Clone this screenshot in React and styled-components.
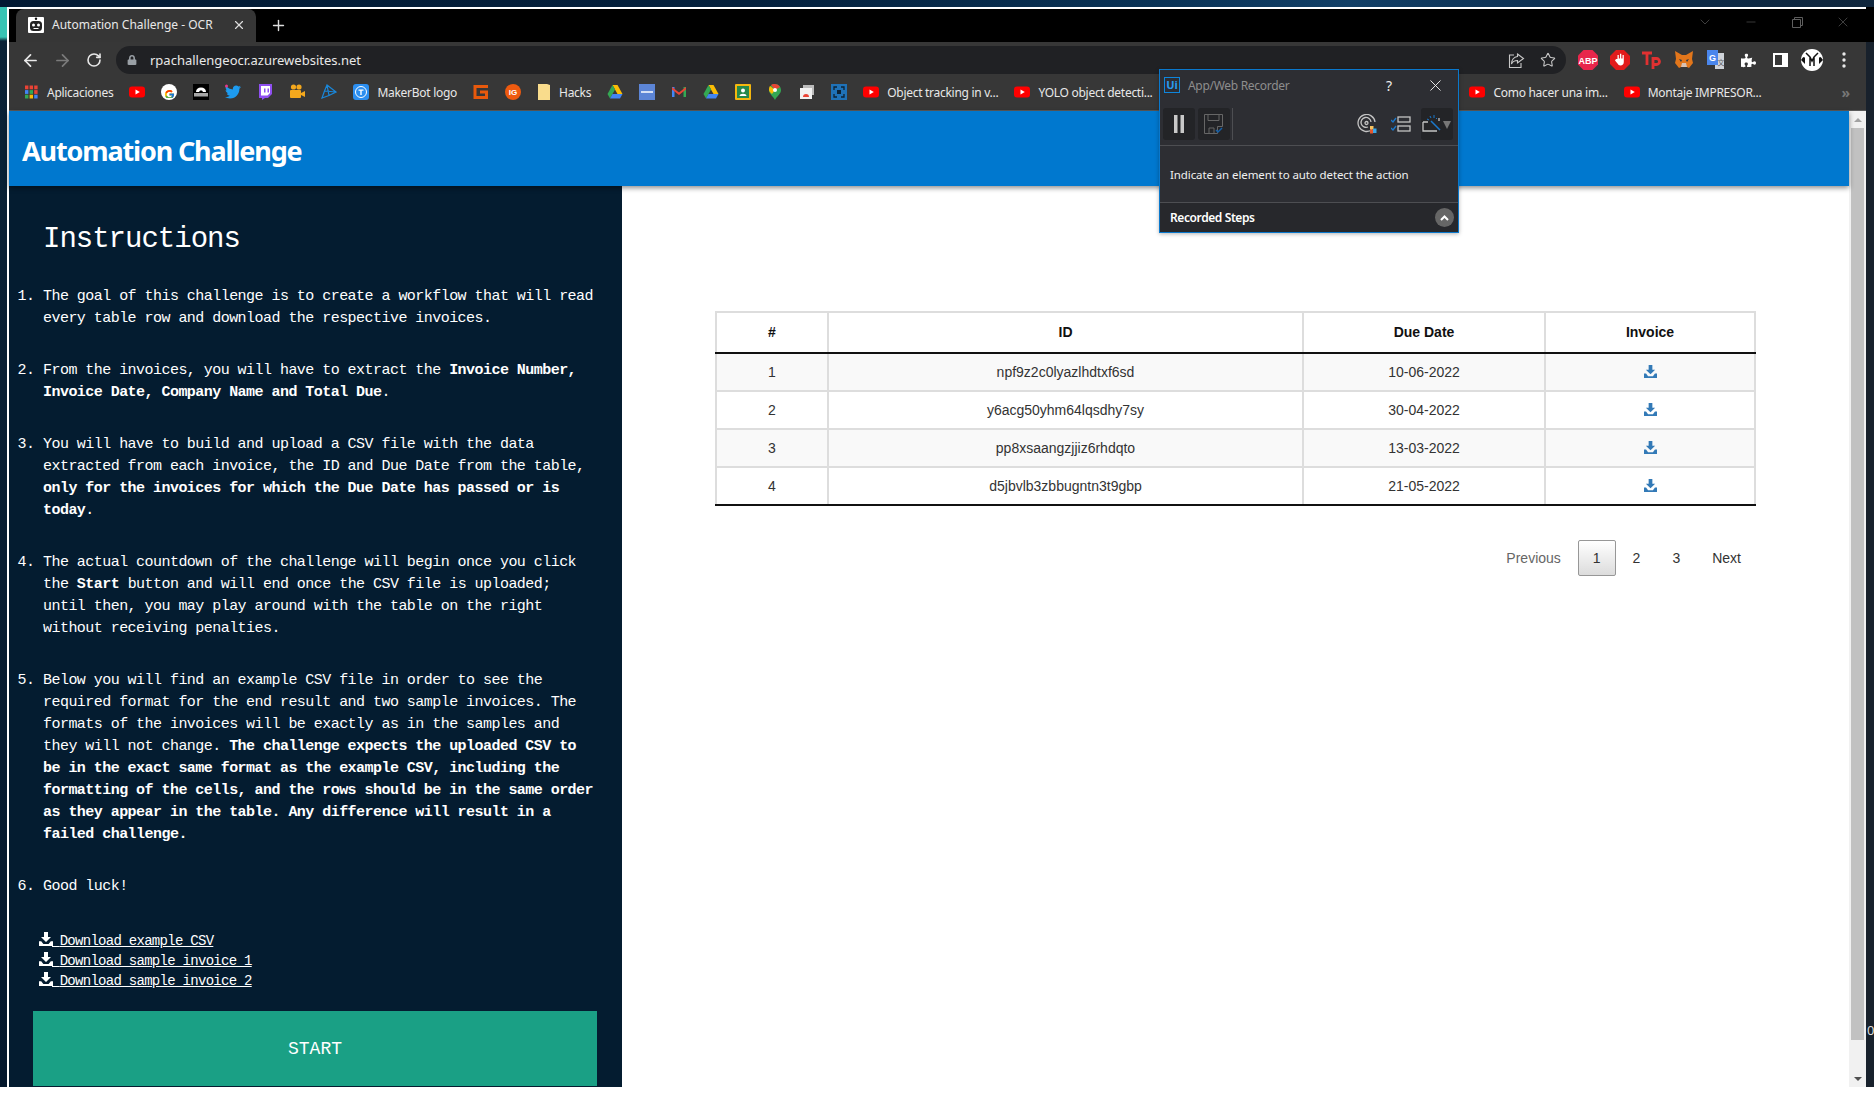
import React from 'react';
import styled, { createGlobalStyle } from 'styled-components';
import { ArrowLeft, ArrowRight, RotateCw, Star, X, Plus, ChevronDown, Minus } from 'lucide-react';
import { FaPuzzlePiece, FaTwitter, FaLock } from 'react-icons/fa';
import { FcGoogle } from 'react-icons/fc';

const GlobalStyle = createGlobalStyle`
  html, body { margin: 0; padding: 0; background: #fff; height: 100%; overflow: hidden; }
  * { box-sizing: border-box; }
`;

const UI_FONT = `"Noto Sans", "Open Sans", "Liberation Sans", sans-serif`;
const MONO_FONT = `"Liberation Mono", "DejaVu Sans Mono", monospace`;

const Screen = styled.div`
  position: relative;
  width: 1874px;
  height: 1087px;
  overflow: hidden;
  display: flex;
  flex-direction: column;
`;

const DesktopTop = styled.div`
  height: 7px;
  flex: none;
  background: linear-gradient(90deg, #031a33 0%, #04203c 40%, #0a3356 62%, #123f66 72%, #0b2c4c 85%, #10263c 100%);
`;

const DesktopRow = styled.div`
  flex: 1;
  min-height: 0;
  display: flex;
`;

const DesktopLeft = styled.div`
  width: 7px;
  flex: none;
  background: linear-gradient(180deg, #37c4b4 0, #37c4b4 30px, #0a2236 34px, #04182d 100%);
`;

const DesktopRight = styled.div`
  width: 8px;
  flex: none;
  position: relative;
  overflow: hidden;
  background: #18212c;
  border-top: 35px solid #000;
  color: #ddd;
  font: 13px ${UI_FONT};
  span { position: absolute; left: 1px; top: 979px; }
`;

const Window = styled.div`
  width: 1859px;
  flex: none;
  border-left: 2px solid #fff;
  border-top: 2px solid #fff;
  display: flex;
  flex-direction: column;
  min-height: 0;
`;

const TabStrip = styled.div`
  height: 33px;
  flex: none;
  background: #000;
  display: flex;
  padding-left: 7px;
  align-items: stretch;
  color: #fff;
`;

const Tab = styled.div`
  width: 240px;
  background: #363636;
  border-radius: 8px 8px 0 0;
  display: flex;
  align-items: center;
  padding: 0 10px 2px 12px;
  font: 12px ${UI_FONT};
  color: #e8e8e8;
`;

const TabTitle = styled.span`
  margin-left: 8px;
  flex: 1;
  white-space: nowrap;
`;

const NewTab = styled.div`
  width: 44px;
  display: flex;
  align-items: center;
  justify-content: center;
  color: #ddd;
`;

const WindowControls = styled.div`
  margin-left: auto;
  display: flex;
  color: #5e5e5e;
`;

const WindowControl = styled.div`
  width: 46px;
  padding-bottom: 7px;
  display: flex;
  align-items: center;
  justify-content: center;
`;

const Toolbar = styled.div`
  height: 36px;
  flex: none;
  background: #373737;
  display: flex;
  align-items: center;
  padding-left: 5px;
`;

const NavButton = styled.div`
  width: 32px;
  height: 28px;
  flex: none;
  display: flex;
  align-items: center;
  justify-content: center;
  color: ${(p) => (p.$off ? '#7b7b7b' : '#e8e8e8')};
`;

const Omnibox = styled.div`
  width: 1450px;
  height: 28px;
  margin-left: 6px;
  flex: none;
  border-radius: 14px;
  background: #202124;
  display: flex;
  align-items: center;
  padding: 0 2px 0 11px;
  color: #e8e8e8;
  font: 13px ${UI_FONT};
`;

const Url = styled.span`
  margin-left: 13px;
  flex: 1;
`;

const OmniIcon = styled.div`
  width: 32px;
  display: flex;
  justify-content: center;
  color: #c8c8c8;
`;

const Extensions = styled.div`
  margin-left: 6px;
  display: flex;
  align-items: center;
`;

const ExtensionSlot = styled.div`
  width: 32px;
  height: 28px;
  display: flex;
  align-items: center;
  justify-content: center;
  color: #fff;
`;

const BookmarksBar = styled.div`
  height: 33px;
  flex: none;
  background: #373737;
  border-bottom: 1px solid #5a5a5a;
  display: flex;
  align-items: center;
  padding: 0 0 4px 6px;
  font: 12px ${UI_FONT};
  color: #e8e8e8;
  white-space: nowrap;
`;

const Bookmark = styled.div`
  display: flex;
  align-items: center;
  padding: 0 8px;
  flex: none;
`;

const BookmarkLabel = styled.span`
  margin-left: 8px;
  letter-spacing: -0.28px;
`;

const BookmarkRight = styled.div`
  margin-left: auto;
  display: flex;
  align-items: center;
`;

const More = styled.span`
  color: #777;
  font-size: 14px;
  font-weight: 700;
  margin-left: 72px;
  margin-right: 16px;
`;

const Viewport = styled.div`
  flex: 1;
  min-height: 0;
  display: flex;
`;

const Page = styled.div`
  flex: 1;
  min-width: 0;
  display: flex;
  flex-direction: column;
  background: #fff;
`;

const SiteHeader = styled.header`
  height: 75px;
  flex: none;
  background: #0078cf;
  display: flex;
  align-items: center;
  padding: 4px 0 0 13px;
  box-shadow: 0 2px 5px rgba(0, 0, 0, 0.45);
  position: relative;
  z-index: 1;
`;

const SiteTitle = styled.h1`
  margin: 0;
  font: 700 27px ${UI_FONT};
  letter-spacing: -1.15px;
  color: #fff;
`;

const Columns = styled.div`
  flex: 1;
  min-height: 0;
  display: flex;
`;

const Sidebar = styled.aside`
  width: 613px;
  flex: none;
  background: #041c30;
  color: #fff;
  font-family: ${MONO_FONT};
  overflow: hidden;
  padding-top: 37px;
`;

const SidebarTitle = styled.h2`
  margin: 0 0 29px 34px;
  font: 400 29px/34px ${MONO_FONT};
  letter-spacing: -1px;
`;

const Steps = styled.ol`
  margin: 0;
  padding: 0 22px 0 34px;
  font-size: 15px;
  line-height: 22px;
  letter-spacing: -0.54px;
`;

const Step = styled.li`
  margin-bottom: 30px;
  &:last-child { margin-bottom: 33px; }
`;

const Links = styled.div`
  margin-left: 30px;
  display: flex;
  flex-direction: column;
  align-items: flex-start;
`;

const FileLink = styled.a`
  color: #fff;
  text-decoration: underline;
  font-size: 14px;
  line-height: 20px;
  letter-spacing: -0.72px;
  white-space: pre;
  svg { margin-right: -1px; }
`;

const StartButton = styled.button`
  display: block;
  width: 564px;
  height: 75px;
  margin: 20px 0 0 24px;
  border: 0;
  background: #1aa085;
  color: #fff;
  font: 18px ${MONO_FONT};
`;

const Main = styled.main`
  flex: 1;
  min-width: 0;
  padding: 125px 93px 0 93px;
`;

const Table = styled.table`
  width: 1039px;
  table-layout: fixed;
  border-collapse: collapse;
  font: 14px "Liberation Sans", Arial, sans-serif;
  color: #333;
  text-align: center;
`;

const HeadCell = styled.th`
  height: 41px;
  padding: 0 0 2px;
  font-weight: 700;
  color: #111;
  border: 2px solid #ddd;
  border-bottom-color: #111;
`;

const Row = styled.tr`
  background: ${(p) => (p.$odd ? '#f9f9f9' : '#fff')};
`;

const Cell = styled.td`
  height: 38px;
  padding: 0;
  border: 2px solid #ddd;
  tr:last-child & { border-bottom-color: #111; }
`;

const Pagination = styled.div`
  margin-top: 34px;
  display: flex;
  justify-content: flex-end;
  font: 14px/20px "Liberation Sans", Arial, sans-serif;
  color: #333;
`;

const PageButton = styled.span`
  margin-left: 2px;
  padding: 7px 14px;
  border: 1px solid ${(p) => (p.$current ? '#979797' : 'transparent')};
  border-radius: 2px;
  color: ${(p) => (p.$off ? '#666' : '#333')};
  background: ${(p) => (p.$current ? 'linear-gradient(180deg, #fff 0%, #dcdcdc 100%)' : 'none')};
`;

const Scrollbar = styled.div`
  width: 17px;
  flex: none;
  background: #f1f1f1;
  display: flex;
  flex-direction: column;
  align-items: center;
`;

const ScrollArrow = styled.div`
  height: 17px;
  flex: none;
  margin-top: ${(p) => (p.$end ? 'auto' : '0')};
  display: flex;
  align-items: center;
  justify-content: center;
`;

const ScrollTriangle = styled.i`
  display: block;
  width: 0;
  height: 0;
  border-left: 4px solid transparent;
  border-right: 4px solid transparent;
  ${(p) => (p.$down ? 'border-top: 4px solid #505050;' : 'border-bottom: 4px solid #a3a3a3;')}
`;

const ScrollThumb = styled.div`
  width: 13px;
  height: 912px;
  background: #c1c1c1;
`;

const Recorder = styled.div`
  position: absolute;
  z-index: 5;
  left: 1159px;
  top: 69px;
  width: 300px;
  height: 164px;
  background: #2d2e33;
  border: 1px solid #0a78cc;
  display: flex;
  flex-direction: column;
  color: #fff;
  font: 12px ${UI_FONT};
  box-shadow: 0 1px 4px rgba(0, 0, 0, 0.3);
`;

const RecorderTitleBar = styled.div`
  height: 32px;
  flex: none;
  display: flex;
  align-items: center;
  padding: 0 0 2px 4px;
  color: #8d8d8d;
`;

const RecorderLogo = styled.div`
  width: 16px;
  height: 16px;
  border: 1px solid #0f86dc;
  color: #2a9bee;
  font: 700 11px/14px ${UI_FONT};
  text-align: center;
`;

const RecorderName = styled.span`
  margin-left: 8px;
  flex: 1;
  letter-spacing: -0.3px;
`;

const RecorderAction = styled.div`
  width: 46px;
  display: flex;
  justify-content: center;
  color: #eee;
  font-size: 14px;
`;

const RecorderTools = styled.div`
  height: 44px;
  flex: none;
  display: flex;
  align-items: center;
  padding: 0 5px 0 3px;
  border-bottom: 1px solid #4d4e52;
`;

const ToolButton = styled.div`
  width: 32px;
  height: 32px;
  flex: none;
  margin-right: ${(p) => p.$mr || 0}px;
  border-radius: 3px;
  display: flex;
  align-items: center;
  justify-content: center;
  background: ${(p) => (p.$plain ? 'none' : '#232427')};
`;

const ToolDivider = styled.div`
  width: 1px;
  height: 32px;
  background: #4d4e52;
  margin-left: 2px;
  margin-right: auto;
`;

const RecorderMessage = styled.div`
  flex: 1;
  display: flex;
  align-items: center;
  padding-left: 10px;
  color: #f0f0f0;
  font-size: 11.5px;
  letter-spacing: -0.1px;
`;

const RecorderFooter = styled.div`
  height: 30px;
  flex: none;
  background: #27282c;
  border-top: 1px solid #4d4e52;
  display: flex;
  align-items: center;
  justify-content: space-between;
  padding: 0 4px 0 10px;
  font-weight: 600;
  letter-spacing: -0.4px;
`;

const RoundChevron = styled.div`
  width: 19px;
  height: 19px;
  border-radius: 50%;
  background: #666;
  display: flex;
  align-items: center;
  justify-content: center;
`;

const DownloadIcon = ({ size = 14, color = 'currentColor' }) => (
  <svg width={size} height={size} viewBox="0 0 14 14" fill={color} style={{ verticalAlign: '-1px' }}>
    <path d="M5 0h4v5h3L7 10 2 5h3z" />
    <path d="M0 9.2h2.2L4.4 12h5.2l2.2-2.8H14V14H0z" />
  </svg>
);

const YouTube = () => (
  <svg width="16" height="16" viewBox="0 0 16 16">
    <rect x="0" y="2.5" width="16" height="11" rx="3" fill="#f00" />
    <path d="M6.5 5.6 10.8 8l-4.3 2.4z" fill="#fff" />
  </svg>
);

const favicons = {
  apps: (
    <svg width="16" height="16" viewBox="0 0 16 16">
      {['#ea4335', '#ea4335', '#ea4335', '#4285f4', '#34a853', '#ea4335', '#34a853', '#fbbc05', '#4285f4'].map((c, i) => (
        <rect key={i} x={2 + (i % 3) * 4.6} y={1.5 + Math.floor(i / 3) * 4.6} width="3.4" height="3.8" fill={c} />
      ))}
    </svg>
  ),
  youtube: <YouTube />,
  google: (
    <svg width="16" height="16" viewBox="0 0 16 16">
      <circle cx="8" cy="8" r="8" fill="#fff" />
      <foreignObject x="2.5" y="2.5" width="11" height="11"><FcGoogle size={11} /></foreignObject>
    </svg>
  ),
  cloud: (
    <svg width="16" height="16" viewBox="0 0 16 16">
      <rect width="16" height="16" fill="#000" />
      <path d="M3 8c0-3 2-4.500 5-4.500S13 5 13 8h-3L9 6.500H7L6 8z" fill="#fff" />
      <rect x="1" y="9" width="14" height="3.500" fill="#ddd" opacity=".75" />
    </svg>
  ),
  twitter: (
    <svg width="16" height="16" viewBox="0 0 16 16">
      <foreignObject width="16" height="16"><FaTwitter size={16} color="#1d9bf0" /></foreignObject>
      <circle cx="1.500" cy="2" r="1.500" fill="#e8388a" />
    </svg>
  ),
  twitch: (
    <svg width="16" height="16" viewBox="0 0 16 16">
      <path d="M2 0h13v10l-4 4H8l-3 2v-2H2z" fill="#8f4ff0" />
      <path d="M4 2h9v7l-2.500 2.500H4z" fill="#fff" />
      <path d="M7 4.500h1.500v4H7zM10.500 4.500H12v4h-1.500z" fill="#8f4ff0" />
    </svg>
  ),
  camera: (
    <svg width="16" height="16" viewBox="0 0 16 16" fill="#f4a81d">
      <circle cx="4.500" cy="3" r="2.600" />
      <circle cx="10" cy="3" r="2.600" />
      <rect x="1" y="6" width="11" height="8" rx="1" />
      <path d="M12 9l4-2v6l-4-2z" />
    </svg>
  ),
  arrow: (
    <svg width="16" height="16" viewBox="0 0 16 16" fill="none" stroke="#1a86d8" strokeWidth="1.200">
      <path d="M6 1 3.500 7 1 14l7-2.500 7-3.500-9-7zM3.500 7 15 8M6 1l2 10.500" />
    </svg>
  ),
  tlogo: (
    <svg width="16" height="16" viewBox="0 0 16 16">
      <rect width="16" height="16" rx="3" fill="#2b8ef0" />
      <circle cx="8" cy="8" r="5.500" fill="none" stroke="#fff" />
      <path d="M5.500 5.500h5v1.200H8.700v4.300H7.300V6.700H5.500z" fill="#fff" />
    </svg>
  ),
  gorange: (
    <svg width="16" height="16" viewBox="0 0 16 16" fill="none" stroke="#e8590c" strokeWidth="3">
      <path d="M15 2.500H2v11h11.500V8H7" />
    </svg>
  ),
  ig: (
    <svg width="16" height="16" viewBox="0 0 16 16">
      <circle cx="8" cy="8" r="8" fill="#ee5a0f" />
      <text x="8" y="11" fontSize="8" fontWeight="700" fontFamily="Liberation Sans" fill="#fff" textAnchor="middle">IG</text>
    </svg>
  ),
  folder: (
    <svg width="14" height="16" viewBox="0 0 14 16">
      <path d="M1 0h9l3 1v15H1z" fill="#f9dc8c" />
    </svg>
  ),
  drive: (
    <svg width="16" height="16" viewBox="0 0 16 16">
      <path d="M5.500 1h5l5 9h-5z" fill="#fbbc05" />
      <path d="M5.500 1 .5 10 3 14.500 8 5.500z" fill="#34a853" />
      <path d="M3 14.500h10l2.500-4.500h-10z" fill="#4285f4" />
    </svg>
  ),
  strip: (
    <svg width="16" height="16" viewBox="0 0 16 16">
      <rect width="16" height="16" fill="#5c85d6" />
      <rect x="2" y="7" width="12" height="2" fill="#d5e0f5" />
    </svg>
  ),
  gmail: (
    <svg width="16" height="16" viewBox="0 0 16 16">
      <path d="M1 3h2.500v10H1z" fill="#4285f4" />
      <path d="M12.500 3H15v10h-2.500z" fill="#34a853" />
      <path d="M1 3l7 5.500L15 3v2.500L8 11 1 5.500z" fill="#ea4335" />
    </svg>
  ),
  classroom: (
    <svg width="16" height="16" viewBox="0 0 16 16">
      <rect width="16" height="16" rx="1" fill="#f5b70f" />
      <rect x="2" y="2" width="12" height="12" fill="#26894b" />
      <circle cx="8" cy="6.500" r="2" fill="#fff" />
      <path d="M4.500 12c0-3 7-3 7 0z" fill="#fff" />
    </svg>
  ),
  maps: (
    <svg width="16" height="16" viewBox="-2 0 16 16">
      <path d="M6 0a6 6 0 0 1 6 6c0 4-4 6-6 10-2-4-6-6-6-10a6 6 0 0 1 6-6z" fill="#34a853" />
      <path d="M1 2 6 6 3 10C1.500 8.500 0 7.500 0 6c0-1.500.3-3 1-4z" fill="#fbbc05" />
      <path d="M2 1a6 6 0 0 1 4-1 6 6 0 0 1 5 3L6 6z" fill="#ea4335" />
      <circle cx="6" cy="6" r="2" fill="#fff" />
    </svg>
  ),
  pages: (
    <svg width="16" height="16" viewBox="0 0 16 16">
      <rect x="4" y="1" width="11" height="10" fill="#bbb" />
      <rect x="1" y="4" width="12" height="11" fill="#f1f1f1" />
      <path d="M4 13a3 3 0 0 1 6 0z" fill="#ea4335" />
    </svg>
  ),
  scan: (
    <svg width="16" height="16" viewBox="0 0 16 16">
      <rect width="16" height="16" fill="#1f72b8" />
      <path d="M3 6V3h3M10 3h3v3M13 10v3h-3M6 13H3v-3" fill="none" stroke="#0d2336" strokeWidth="1.300" />
      <rect x="6" y="6" width="4" height="4" fill="#0d2336" />
    </svg>
  ),
};

const bookmarksLeft = [
  { icon: 'apps', label: 'Aplicaciones' },
  { icon: 'youtube' }, { icon: 'google' }, { icon: 'cloud' }, { icon: 'twitter' },
  { icon: 'twitch' }, { icon: 'camera' }, { icon: 'arrow' },
  { icon: 'tlogo', label: 'MakerBot logo' },
  { icon: 'gorange' }, { icon: 'ig' },
  { icon: 'folder', label: 'Hacks' },
  { icon: 'drive' }, { icon: 'strip' }, { icon: 'gmail' }, { icon: 'drive' },
  { icon: 'classroom' }, { icon: 'maps' }, { icon: 'pages' }, { icon: 'scan' },
  { icon: 'youtube', label: 'Object tracking in v...' },
  { icon: 'youtube', label: 'YOLO object detecti...' },
];

const bookmarksRight = [
  { icon: 'youtube', label: 'Como hacer una im...' },
  { icon: 'youtube', label: 'Montaje IMPRESOR...' },
];

const invoices = [
  { n: 1, id: 'npf9z2c0lyazlhdtxf6sd', due: '10-06-2022' },
  { n: 2, id: 'y6acg50yhm64lqsdhy7sy', due: '30-04-2022' },
  { n: 3, id: 'pp8xsaangzjjiz6rhdqto', due: '13-03-2022' },
  { n: 4, id: 'd5jbvlb3zbbugntn3t9gbp', due: '21-05-2022' },
];

const BookmarkItem = ({ icon, label }) => (
  <Bookmark>
    {favicons[icon]}
    {label && <BookmarkLabel>{label}</BookmarkLabel>}
  </Bookmark>
);

const extensions = [
  <svg key="abp" width="22" height="22" viewBox="0 0 22 22">
    <path d="M6.500 1h9L21 6.500v9L15.500 21h-9L1 15.500v-9z" fill="#e8264b" />
    <text x="11" y="14.500" fontSize="9" fontWeight="700" fontFamily="Liberation Sans" fill="#fff" textAnchor="middle">ABP</text>
  </svg>,
  <svg key="hand" width="20" height="20" viewBox="0 0 20 20">
    <path d="M6 0h8l6 6v8l-6 6H6l-6-6V6z" fill="#e21b1b" />
    <path d="M6 9h1.500V5h1.300v3.500H10V3.800h1.300V8.500h1.200V5h1.300v7c0 2-1.300 3.500-3.300 3.500-1.500 0-2.300-.8-3-2L5 10.500z" fill="#fff" />
  </svg>,
  <svg key="tp" width="20" height="20" viewBox="0 0 20 20" fill="none" stroke="#e03131" strokeWidth="2.800">
    <path d="M0 3h10M5 3v12M11 19V8.500h3.500a3 3 0 0 1 0 6H11" />
  </svg>,
  <svg key="fox" width="20" height="20" viewBox="0 0 20 20">
    <path d="M1 1l7 4h4l7-4-1 8 1 4-4 5-2-1H7l-2 1-4-5 1-4z" fill="#e2761b" />
    <path d="M7 17h6l-1-4H8z" fill="#d7c1b3" />
    <path d="M5 9l3 1-1 2zM15 9l-3 1 1 2z" fill="#233447" />
  </svg>,
  <svg key="trans" width="20" height="20" viewBox="0 0 20 20">
    <path d="M9 3h9v16H9z" fill="#cfd3d8" />
    <path d="M1 0h11v15H1z" fill="#4a86ec" />
    <text x="6.500" y="11" fontSize="9" fontWeight="700" fontFamily="Liberation Sans" fill="#fff" textAnchor="middle">G</text>
    <text x="15" y="15" fontSize="7" fontFamily="Noto Sans CJK SC" fill="#5f6368" textAnchor="middle">文</text>
  </svg>,
  <FaPuzzlePiece key="puzzle" size={15} color="#fff" />,
  <svg key="panel" width="15" height="14" viewBox="0 0 15 14">
    <path fillRule="evenodd" d="M0 0h15v14H0zM2 2v10h7V2z" fill="#fff" />
  </svg>,
  <svg key="avatar" width="22" height="22" viewBox="0 0 22 22">
    <circle cx="11" cy="11" r="11" fill="#fff" />
    <path d="M5 4l4 4v9M17 4l-4 4v9M9 8l2 4 2-4" fill="none" stroke="#111" strokeWidth="1.500" />
    <path d="M0 11c2-3 3-4 4-2v6zM22 11c-2-3-3-4-4-2v6z" fill="#111" />
  </svg>,
  <svg key="dots" width="4" height="16" viewBox="0 0 4 16" fill="#e8e8e8">
    <circle cx="2" cy="2" r="1.700" /><circle cx="2" cy="8" r="1.700" /><circle cx="2" cy="14" r="1.700" />
  </svg>,
];

const App = () => (
  <Screen>
    <GlobalStyle />
    <DesktopTop />
    <DesktopRow>
      <DesktopLeft />
      <Window>
        <TabStrip>
          <Tab>
            <svg width="16" height="16" viewBox="0 0 16 16">
              <rect width="16" height="16" rx="1" fill="#fff" />
              <circle cx="8" cy="1.800" r="1.200" fill="#111" />
              <rect x="2" y="4" width="12" height="10" rx="3.500" fill="#222" />
              <circle cx="5.500" cy="8" r="1.500" fill="#fff" />
              <circle cx="10.500" cy="8" r="1.500" fill="#fff" />
              <rect x="5.500" y="11" width="5" height="1" fill="#fff" />
            </svg>
            <TabTitle>Automation Challenge - OCR</TabTitle>
            <X size={14} color="#ddd" />
          </Tab>
          <NewTab><Plus size={17} /></NewTab>
          <WindowControls>
            <WindowControl><ChevronDown size={16} strokeWidth={1} /></WindowControl>
            <WindowControl><Minus size={14} strokeWidth={1} /></WindowControl>
            <WindowControl>
              <svg width="11" height="11" viewBox="0 0 11 11" fill="none" stroke="currentColor">
                <path d="M.5 2.500h8v8h-8zM2.500 2.500v-2h8v8h-2" />
              </svg>
            </WindowControl>
            <WindowControl><X size={16} strokeWidth={1} /></WindowControl>
          </WindowControls>
        </TabStrip>

        <Toolbar>
          <NavButton><ArrowLeft size={19} strokeWidth={2.2} /></NavButton>
          <NavButton $off><ArrowRight size={19} strokeWidth={2.2} /></NavButton>
          <NavButton><RotateCw size={16} strokeWidth={2.4} /></NavButton>
          <Omnibox>
            <FaLock size={10} color="#9aa0a6" />
            <Url>rpachallengeocr.azurewebsites.net</Url>
            <OmniIcon>
              <svg width="17" height="17" viewBox="0 0 17 17" fill="none" stroke="currentColor" strokeWidth="1.100">
                <path d="M6 3H1.500v12.500H13V11M9.500 2l6 4.500-6 4.500V8.500c-3 0-5 1-6 3.500 0-4 2.500-7 6-7.500z" />
              </svg>
            </OmniIcon>
            <OmniIcon><Star size={16} strokeWidth={1.6} /></OmniIcon>
          </Omnibox>
          <Extensions>
            {extensions.map((icon, i) => <ExtensionSlot key={i}>{icon}</ExtensionSlot>)}
          </Extensions>
        </Toolbar>

        <BookmarksBar>
          {bookmarksLeft.map((b, i) => <BookmarkItem key={i} {...b} />)}
          <BookmarkRight>
            {bookmarksRight.map((b, i) => <BookmarkItem key={i} {...b} />)}
            <More>»</More>
          </BookmarkRight>
        </BookmarksBar>

        <Viewport>
          <Page>
            <SiteHeader>
              <SiteTitle>Automation Challenge</SiteTitle>
            </SiteHeader>
            <Columns>
              <Sidebar>
                <SidebarTitle>Instructions</SidebarTitle>
                <Steps>
                  <Step>The goal of this challenge is to create a workflow that will read every table row and download the respective invoices.</Step>
                  <Step>From the invoices, you will have to extract the <b>Invoice Number, Invoice Date, Company Name and Total Due</b>.</Step>
                  <Step>You will have to build and upload a CSV file with the data extracted from each invoice, the ID and Due Date from the table, <b>only for the invoices for which the Due Date has passed or is today</b>.</Step>
                  <Step>The actual countdown of the challenge will begin once you click the <b>Start</b> button and will end once the CSV file is uploaded; until then, you may play around with the table on the right without receiving penalties.</Step>
                  <Step>Below you will find an example CSV file in order to see the required format for the end result and two sample invoices. The formats of the invoices will be exactly as in the samples and they will not change. <b>The challenge expects the uploaded CSV to be in the exact same format as the example CSV, including the formatting of the cells, and the rows should be in the same order as they appear in the table. Any difference will result in a failed challenge.</b></Step>
                  <Step>Good luck!</Step>
                </Steps>
                <Links>
                  {['Download example CSV', 'Download sample invoice 1', 'Download sample invoice 2'].map((t) => (
                    <FileLink key={t}><DownloadIcon size={14} color="#fff" /> {t}</FileLink>
                  ))}
                </Links>
                <StartButton>START</StartButton>
              </Sidebar>
              <Main>
                <Table>
                  <colgroup>
                    <col style={{ width: 112 }} />
                    <col style={{ width: 475 }} />
                    <col style={{ width: 242 }} />
                    <col style={{ width: 210 }} />
                  </colgroup>
                  <thead>
                    <tr>
                      <HeadCell>#</HeadCell>
                      <HeadCell>ID</HeadCell>
                      <HeadCell>Due Date</HeadCell>
                      <HeadCell>Invoice</HeadCell>
                    </tr>
                  </thead>
                  <tbody>
                    {invoices.map((row) => (
                      <Row key={row.n} $odd={row.n % 2 === 1}>
                        <Cell>{row.n}</Cell>
                        <Cell>{row.id}</Cell>
                        <Cell>{row.due}</Cell>
                        <Cell><DownloadIcon size={13} color="#337ab7" /></Cell>
                      </Row>
                    ))}
                  </tbody>
                </Table>
                <Pagination>
                  <PageButton $off>Previous</PageButton>
                  <PageButton $current>1</PageButton>
                  <PageButton>2</PageButton>
                  <PageButton>3</PageButton>
                  <PageButton>Next</PageButton>
                </Pagination>
              </Main>
            </Columns>
          </Page>
          <Scrollbar>
            <ScrollArrow><ScrollTriangle /></ScrollArrow>
            <ScrollThumb />
            <ScrollArrow $end><ScrollTriangle $down /></ScrollArrow>
          </Scrollbar>
        </Viewport>
      </Window>
      <DesktopRight><span>0</span></DesktopRight>
    </DesktopRow>

    <Recorder>
      <RecorderTitleBar>
        <RecorderLogo>Ui</RecorderLogo>
        <RecorderName>App/Web Recorder</RecorderName>
        <RecorderAction>?</RecorderAction>
        <RecorderAction><X size={19} strokeWidth={1.2} /></RecorderAction>
      </RecorderTitleBar>
      <RecorderTools>
        <ToolButton $mr={3}>
          <svg width="12" height="18" viewBox="0 0 12 18" fill="#c9c9c9"><rect x="1" width="3.500" height="18" /><rect x="7.500" width="3.500" height="18" /></svg>
        </ToolButton>
        <ToolButton>
          <svg width="20" height="20" viewBox="0 0 20 20" fill="none" stroke="#666">
            <path d="M.5.500h18v12h-5v7H.5zM4 .5v6h11v-6M5 19v-5h5v5" />
            <path d="M12 16l2 2 4-4" stroke="#135fa8" strokeWidth="1.500" />
          </svg>
        </ToolButton>
        <ToolDivider />
        <ToolButton $plain $mr={2}>
          <svg width="20" height="20" viewBox="0 0 20 20" fill="none" stroke="#c4c4c4" strokeWidth="1.300">
            <path d="M15 15.500A8.500 8.500 0 1 1 18 8" />
            <path d="M11 13a5 5 0 1 1 3-5" />
            <circle cx="9.500" cy="9" r="1.500" />
            <rect x="13" y="12" width="3.500" height="3.500" fill="#f7c35f" stroke="none" />
            <rect x="13" y="15.500" width="3" height="4" fill="#e4572e" stroke="none" />
            <rect x="16" y="14.500" width="3.500" height="4.500" fill="#3ba7e8" stroke="none" />
          </svg>
        </ToolButton>
        <ToolButton $plain $mr={4}>
          <svg width="20" height="16" viewBox="0 0 20 16" fill="none" stroke="#c4c4c4" strokeWidth="1.300">
            <rect x="7" y="1" width="12" height="5" />
            <rect x="7" y="10" width="12" height="5" />
            <path d="M0 4l2 2 3-4M0 12l2 2 3-4" stroke="#1a78cc" />
          </svg>
        </ToolButton>
        <ToolButton>
          <svg width="30" height="18" viewBox="0 0 30 18" fill="none">
            <path d="M1 7v9h14M1 7h5M17 3v3" stroke="#c4c4c4" strokeWidth="1.300" />
            <path d="M9 6l9 9" stroke="#1a78cc" strokeWidth="1.500" />
            <path d="M8 1l1 2M12 0v3M5 4l2 1M15 3l-1 1" stroke="#1a78cc" />
            <path d="M21 6h8l-4 8z" fill="#777" />
          </svg>
        </ToolButton>
      </RecorderTools>
      <RecorderMessage>Indicate an element to auto detect the action</RecorderMessage>
      <RecorderFooter>
        Recorded Steps
        <RoundChevron>
          <svg width="9" height="6" viewBox="0 0 9 6" fill="none" stroke="#fff" strokeWidth="2"><path d="M1 5l3.500-3.500L8 5" /></svg>
        </RoundChevron>
      </RecorderFooter>
    </Recorder>
  </Screen>
);

export default App;
